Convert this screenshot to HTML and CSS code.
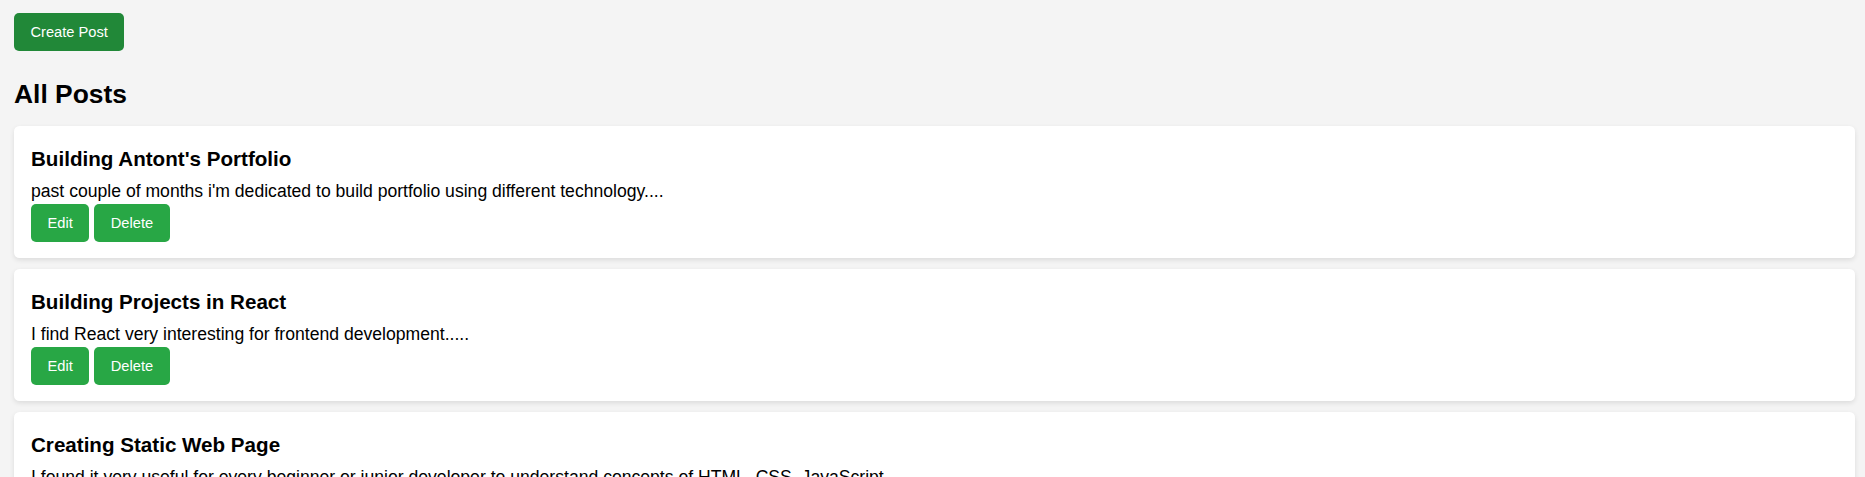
FILE: index.html
```html
<!DOCTYPE html>
<html lang="en">
<head>
<meta charset="utf-8">
<title>All Posts</title>
<link rel="stylesheet" href="styles.css">
</head>
<body>
  <div class="toolbar">
    <button class="btn btn-create">Create Post</button>
  </div>
  <h2 class="page-title">All Posts</h2>
  <div class="post-list">
    <div class="post-card">
      <h3 class="post-title">Building Antont's Portfolio</h3>
      <p class="post-body">past couple of months i'm dedicated to build portfolio using different technology....</p>
      <div class="post-actions">
        <button class="btn">Edit</button>
        <button class="btn">Delete</button>
      </div>
    </div>
    <div class="post-card">
      <h3 class="post-title">Building Projects in React</h3>
      <p class="post-body">I find React very interesting for frontend development.....</p>
      <div class="post-actions">
        <button class="btn">Edit</button>
        <button class="btn">Delete</button>
      </div>
    </div>
    <div class="post-card">
      <h3 class="post-title">Creating Static Web Page</h3>
      <p class="post-body">I found it very useful for every beginner or junior developer to understand concepts of HTML, CSS, JavaScript....</p>
      <div class="post-actions">
        <button class="btn">Edit</button>
        <button class="btn">Delete</button>
      </div>
    </div>
  </div>
</body>
</html>
```
FILE: styles.css
```css
html, body {
  margin: 0;
}
body {
  background: #f4f4f4;
  padding: 13px 10px 0 14px;
  font-family: "Liberation Sans", Arial, sans-serif;
  font-size: 17.6px;
  color: #000;
}
.toolbar {
  display: flex;
}
.btn {
  height: 38px;
  padding: 0 16.5px;
  border: none;
  border-radius: 5px;
  background: #28a745;
  color: #fff;
  font-family: "Liberation Sans", Arial, sans-serif;
  font-size: 14.67px;
  cursor: pointer;
}
.btn-create {
  background: #218838;
}
.page-title {
  font-size: 26.4px;
  line-height: 30px;
  font-weight: bold;
  margin: 28px 0 17px;
}
.post-card {
  background: #fff;
  border-radius: 5.5px;
  box-shadow: 0 2px 5px rgba(0, 0, 0, 0.1);
  padding: 16px 17px;
  margin-bottom: 11px;
}
.post-title {
  font-size: 20.6px;
  line-height: 24px;
  font-weight: bold;
  margin: 5px 0 0;
}
.post-body {
  font-size: 17.6px;
  line-height: 20px;
  margin: 10px 0 0;
}
.post-actions {
  display: flex;
  gap: 5px;
  margin-top: 3px;
}
```
